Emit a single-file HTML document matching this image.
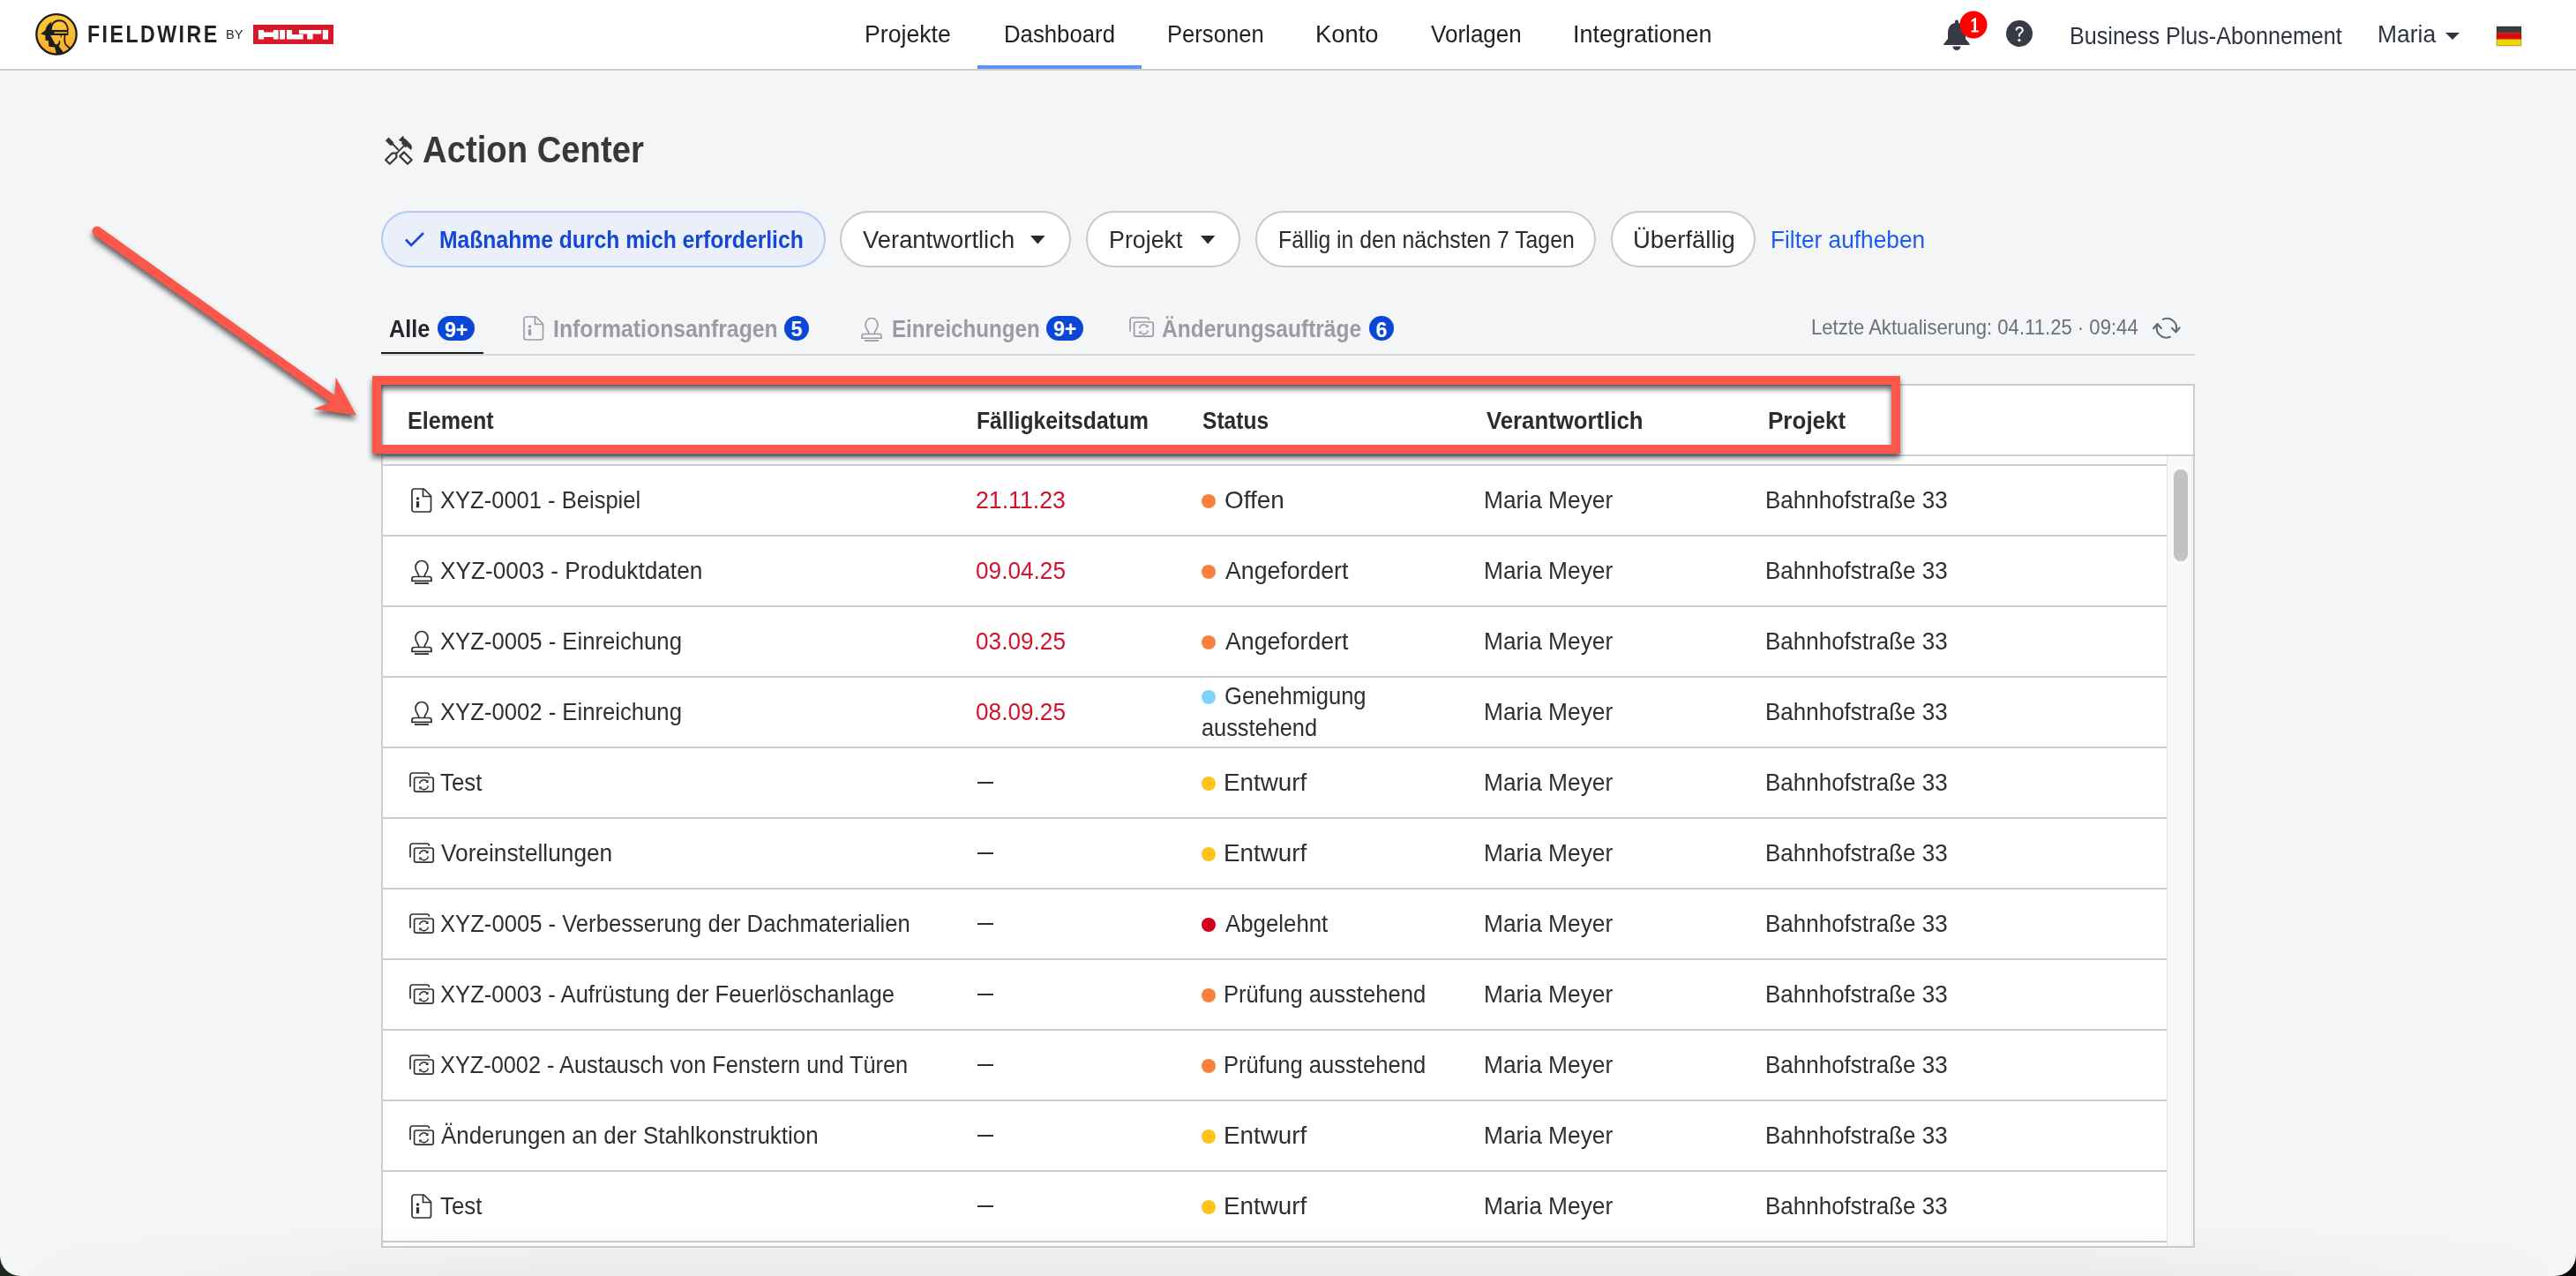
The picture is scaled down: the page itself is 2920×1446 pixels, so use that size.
<!DOCTYPE html><html><head><meta charset='utf-8'><title>Action Center</title><style>
*{margin:0;padding:0;box-sizing:border-box}
html,body{width:2920px;height:1446px;overflow:hidden}
body{position:relative;background:#f4f5f7;font-family:"Liberation Sans",sans-serif}
.t{position:absolute;white-space:nowrap;line-height:1;transform-origin:0 0;font-family:"Liberation Sans",sans-serif}
svg{overflow:visible}
</style></head><body>
<div style="position:absolute;left:0px;top:0px;width:2920px;height:78px;background:#fff"></div>
<div style="position:absolute;left:0px;top:78px;width:2920px;height:2px;background:#cdcdcd"></div>
<svg style="position:absolute;left:38px;top:13px;" width="52" height="52" viewBox="0 0 52 52"><defs><linearGradient id='lg' x1='0' y1='0' x2='0' y2='1'><stop offset='0' stop-color='#fdcb34'/><stop offset='1' stop-color='#f6ad2b'/></linearGradient><clipPath id='lc'><circle cx='26' cy='25.8' r='22.8'/></clipPath></defs><circle cx='26' cy='25.8' r='22.7' fill='url(#lg)' stroke='#1c1d21' stroke-width='2.3'/><g clip-path='url(#lc)' fill='#1c1d21'><path d='M19.8 21 C19.8 14.5 23.5 10.2 29 10.2 C34.8 10.2 38.6 14.5 39 21' fill='none' stroke='#1c1d21' stroke-width='1.9'/><path d='M20.6 11.6 C16.5 13.8 14.2 17.5 13.4 21.2 L8.1 25.5 L13.4 27.1 L13.4 32.6 L17 33.2 L17.3 39.8 L24 40.5 L26.5 50 L36 50 L31.5 43 L28.5 39.2 C30.2 37.6 30.7 35.2 29.9 33 L28.7 33.6 C28.9 36 27 37.6 24.6 37.3 L22.8 33.8 L19.2 27.1 L39.4 27.1 L39.4 21 L19.9 21 C19.9 17 20.1 14 20.6 11.6 Z'/><rect x='23.6' y='23.2' width='14.3' height='1.7' fill='#f0b330'/><rect x='30.6' y='27' width='1.2' height='2.3'/><path d='M35.5 27 C35 31 35 35 36.6 37.6 L42 42.5' fill='none' stroke='#1c1d21' stroke-width='1.7'/></g></svg>
<svg style="position:absolute;left:287px;top:28px;" width="91" height="22" viewBox="0 0 91 22"><rect x='0' y='0' width='91' height='22' fill='#d7182a'/><path d='M5.9 5.9 H12.1 V8.6 H22.8 V5.9 H28.6 V16.6 H22.8 V14.05 H12.1 V16.6 H5.9 Z' fill='#fff'/><rect x='30.1' y='5.9' width='5.9' height='10.7' fill='#fff'/><path d='M37.9 5.9 H44.1 V11.1 H56.7 V16.6 H37.9 Z' fill='#fff'/><path d='M51.9 5.9 H77.3 V10.6 H67.6 V16.6 H61.2 V10.6 H51.9 Z' fill='#fff'/><rect x='78.85' y='5.9' width='6.2' height='10.7' fill='#fff'/></svg>
<div style="position:absolute;left:1108px;top:74px;width:186px;height:4px;background:#5b92f4"></div>
<svg style="position:absolute;left:2202px;top:21px;" width="32" height="36" viewBox="0 0 32 36"><path d='M16 1.5 a2 2 0 0 1 2 2 v1.4 C24 6.2 26 11 26 17 v6 l4.5 5.5 c0.6 0.8 0.2 1.6 -0.8 1.6 H2.3 c-1 0 -1.4 -0.8 -0.8 -1.6 L6 23 v-6 C6 11 8 6.2 14 4.9 V3.5 a2 2 0 0 1 2 -2 z' fill='#353a44'/><path d='M11.5 31.5 h9 a4.5 4.5 0 0 1 -9 0 z' fill='#353a44'/></svg>
<svg style="position:absolute;left:2221px;top:12px;" width="32" height="32" viewBox="0 0 32 32"><circle cx='16' cy='16' r='15.5' fill='#ff0000'/><path d='M13.5 11 L17.5 8.2 H19 V22.5 H21.8 V24.5 H13.6 V22.5 H16.4 V11.6 L13.9 13.1 Z' fill='#fff'/></svg>
<svg style="position:absolute;left:2274px;top:23px;" width="30" height="30" viewBox="0 0 30 30"><circle cx='15' cy='15' r='15' fill='#363b45'/><path d='M10.6 11.5 C10.6 8.6 12.6 7 15.2 7 C17.9 7 19.8 8.7 19.8 11.1 C19.8 13.3 18.4 14.2 17.2 15 C16.3 15.6 15.9 16.1 15.9 17.3 V18.6 H14 V17.1 C14 15.5 14.7 14.6 15.9 13.8 C17 13.1 17.7 12.5 17.7 11.2 C17.7 9.9 16.7 8.9 15.2 8.9 C13.6 8.9 12.6 10 12.6 11.5 Z' fill='#fff'/><circle cx='14.9' cy='22.6' r='1.6' fill='#fff'/></svg>
<svg style="position:absolute;left:2772px;top:37px;" width="16" height="8" viewBox="0 0 16 8"><path d='M0 0 H16 L8 8 Z' fill='#2f3540'/></svg>
<svg style="position:absolute;left:2830px;top:30px;filter:drop-shadow(0 0 1px rgba(0,0,0,0.35))" width="28" height="22" viewBox="0 0 28 22"><rect x='0' y='0' width='28' height='7.4' fill='#3d3d3d'/><rect x='0' y='7.3' width='28' height='7.4' fill='#dd0a0a'/><rect x='0' y='14.6' width='28' height='7.4' fill='#f2d600'/><rect x='0.5' y='0.5' width='27' height='21' fill='none' stroke='rgba(0,0,0,0.18)' stroke-width='1'/></svg>
<svg style="position:absolute;left:432px;top:150px;" width="40" height="40" viewBox="0 0 40 40"><path d='M5.3 9.4 L8.5 6.1 L13.6 11.1 L13.6 13.8 L12.6 14.2 L10.3 14.4 Z' fill='#383838' stroke='#383838' stroke-width='0.8' stroke-linejoin='round'/><path d='M12.8 13 L19.8 20' stroke='#383838' stroke-width='1.9'/><path d='M21.3 27.1 L26 22.4 L34.7 31.2 L30 35.8 Z' fill='none' stroke='#383838' stroke-width='2.2' stroke-linejoin='round'/><path d='M17.4 23.8 L26.3 14.9' stroke='#383838' stroke-width='1.9'/><path d='M5.1 31.3 L12.6 23.6 L17.2 23.6 L17.4 28.2 L9.8 35.7 Z' fill='none' stroke='#383838' stroke-width='2.2' stroke-linejoin='round'/><path d='M20.2 8.8 L25 4.3 L25.8 7.3 L27.3 7.5 L33.2 13.6 C34.8 15.5 35 18 33.8 19.5 L29.5 15.8 L27.6 16.8 L23.2 12.4 L24.4 11 L22.8 9.8 Z' fill='#383838' stroke='#383838' stroke-width='0.8' stroke-linejoin='round'/></svg>
<div style="position:absolute;left:432px;top:239px;width:503.5px;height:63.5px;background:#ebeff9;border:2px solid #b3caf7;border-radius:32px"></div>
<svg style="position:absolute;left:458px;top:262px;" width="24" height="18" viewBox="0 0 24 18"><path d='M2 9.5 L8.2 15.8 L22 2' fill='none' stroke='#1447d6' stroke-width='2.6'/></svg>
<div style="position:absolute;left:952.2px;top:239px;width:262.0px;height:63.5px;background:#fff;border:2px solid #c9cacd;border-radius:32px"></div>
<div style="position:absolute;left:1231px;top:239px;width:175.3px;height:63.5px;background:#fff;border:2px solid #c9cacd;border-radius:32px"></div>
<div style="position:absolute;left:1423.4px;top:239px;width:385.9px;height:63.5px;background:#fff;border:2px solid #c9cacd;border-radius:32px"></div>
<div style="position:absolute;left:1826.2px;top:239px;width:164.0px;height:63.5px;background:#fff;border:2px solid #c9cacd;border-radius:32px"></div>
<svg style="position:absolute;left:1168.4px;top:266.5px;" width="16.6" height="9.5" viewBox="0 0 16.6 9.5"><path d='M0 0 H16.6 L8.3 9.5 Z' fill='#2a2a2a'/></svg>
<svg style="position:absolute;left:1361.3px;top:266.5px;" width="16.3" height="9.5" viewBox="0 0 16.3 9.5"><path d='M0 0 H16.3 L8.15 9.5 Z' fill='#2a2a2a'/></svg>
<div style="position:absolute;left:432px;top:401px;width:2056px;height:2px;background:#d6d8dc"></div>
<div style="position:absolute;left:432px;top:398.7px;width:116px;height:2.8px;background:#1e1e1e"></div>
<div style="position:absolute;left:496px;top:357.8px;width:42px;height:28.19999999999999px;background:#0a47d6;border-radius:14.099999999999994px"></div><span class=t style="left:496px;top:360.0px;width:42px;height:28.19999999999999px;line-height:28.19999999999999px;text-align:center;font-size:23px;font-weight:700;color:#fff">9+</span>
<div style="position:absolute;left:889px;top:358.2px;width:28px;height:27.80000000000001px;background:#0a47d6;border-radius:13.900000000000006px"></div><span class=t style="left:889px;top:360.4px;width:28px;height:27.80000000000001px;line-height:27.80000000000001px;text-align:center;font-size:23px;font-weight:700;color:#fff">5</span>
<div style="position:absolute;left:1186px;top:358.2px;width:42px;height:27.80000000000001px;background:#0a47d6;border-radius:13.900000000000006px"></div><span class=t style="left:1186px;top:360.4px;width:42px;height:27.80000000000001px;line-height:27.80000000000001px;text-align:center;font-size:23px;font-weight:700;color:#fff">9+</span>
<div style="position:absolute;left:1552px;top:357.6px;width:28px;height:28.399999999999977px;background:#0a47d6;border-radius:14.199999999999989px"></div><span class=t style="left:1552px;top:359.8px;width:28px;height:28.399999999999977px;line-height:28.399999999999977px;text-align:center;font-size:23px;font-weight:700;color:#fff">6</span>
<svg style="position:absolute;left:592.5px;top:358px;" width="24" height="28" viewBox="0 0 24 28"><path d='M3 1 H14.5 L22.5 9 V24.5 A2.5 2.5 0 0 1 20 27 H3.5 A2.5 2.5 0 0 1 1 24.5 V3.5 A2.5 2.5 0 0 1 3.5 1 Z' fill='none' stroke='#9a9ca1' stroke-width='1.6' stroke-linejoin='round'/><path d='M13.5 1 V9.5 H22.5' fill='none' stroke='#9a9ca1' stroke-width='1.6'/><circle cx='7.5' cy='12' r='1.7' fill='#9a9ca1'/><rect x='5.9' y='15.2' width='3.2' height='7' fill='#9a9ca1'/></svg>
<svg style="position:absolute;left:975.5px;top:358.5px;" width="24" height="28" viewBox="0 0 24 28"><path d='M9 19.5 C9 16 5 14 5 9 C5 4.8 8 1.5 12 1.5 C16 1.5 19 4.8 19 9 C19 14 15 16 15 19.5' fill='none' stroke='#9a9ca1' stroke-width='1.6'/><path d='M1 24.3 V22 C1 20.5 2 19.5 3.5 19.5 H20.5 C22 19.5 23 20.5 23 22 V24.3 Z' fill='none' stroke='#9a9ca1' stroke-width='1.6'/><rect x='4' y='26.2' width='16' height='1.8' fill='#9a9ca1'/></svg>
<svg style="position:absolute;left:1280px;top:358.5px;" width="28" height="23" viewBox="0 0 28 23"><path d='M1 16 V3.5 A2.5 2.5 0 0 1 3.5 1 H20 A2.5 2.5 0 0 1 22.5 3' fill='none' stroke='#9a9ca1' stroke-width='1.7' stroke-linecap='round'/><rect x='5.6' y='6' width='21.6' height='16.2' rx='2.2' fill='none' stroke='#9a9ca1' stroke-width='1.7'/><path d='M11.5 13 A5 5 0 0 1 20.3 10.6' fill='none' stroke='#9a9ca1' stroke-width='1.4'/><path d='M21.6 8.6 L21.6 12 L18.2 12 Z' fill='#9a9ca1'/><path d='M21.3 15.5 A5 5 0 0 1 12.5 17.8' fill='none' stroke='#9a9ca1' stroke-width='1.4'/><path d='M11.2 19.8 L11.2 16.4 L14.6 16.4 Z' fill='#9a9ca1'/></svg>
<svg style="position:absolute;left:2436px;top:356px;" width="40" height="32" viewBox="0 0 40 32"><g fill='none' stroke='#656b75' stroke-width='2.1' stroke-linecap='round' stroke-linejoin='round'><path d='M15.8 5.9 A10.8 10.8 0 0 1 30.4 19.5'/><path d='M26 15.7 L30.5 20.3 L34.7 15.4'/><path d='M23.8 25.8 A10.8 10.8 0 0 1 9.3 12.5'/><path d='M5 16.3 L9.5 11 L13.9 16'/></g></svg>
<div style="position:absolute;left:432px;top:435px;width:2056px;height:979px;background:#fff;border:2px solid #cacdd4"></div>
<div style="position:absolute;left:434px;top:514.8px;width:2052px;height:1.8px;background:#cacdd4"></div>
<div style="position:absolute;left:2456px;top:516.6px;width:30px;height:895.4px;background:#f9f9f9;border-left:1.5px solid #e6e6e8"></div>
<div style="position:absolute;left:2484px;top:516.6px;width:1px;height:895.4px;background:#ececee"></div>
<div style="position:absolute;left:2464px;top:532px;width:16px;height:104px;background:#c1c1c1;border-radius:8px"></div>
<div style="position:absolute;left:434px;top:526px;width:2022px;height:1.8px;background:#cacdd4"></div>
<div style="position:absolute;left:434px;top:606px;width:2022px;height:1.8px;background:#cacdd4"></div>
<div style="position:absolute;left:434px;top:686px;width:2022px;height:1.8px;background:#cacdd4"></div>
<div style="position:absolute;left:434px;top:766px;width:2022px;height:1.8px;background:#cacdd4"></div>
<div style="position:absolute;left:434px;top:846px;width:2022px;height:1.8px;background:#cacdd4"></div>
<div style="position:absolute;left:434px;top:926px;width:2022px;height:1.8px;background:#cacdd4"></div>
<div style="position:absolute;left:434px;top:1006px;width:2022px;height:1.8px;background:#cacdd4"></div>
<div style="position:absolute;left:434px;top:1086px;width:2022px;height:1.8px;background:#cacdd4"></div>
<div style="position:absolute;left:434px;top:1166px;width:2022px;height:1.8px;background:#cacdd4"></div>
<div style="position:absolute;left:434px;top:1246px;width:2022px;height:1.8px;background:#cacdd4"></div>
<div style="position:absolute;left:434px;top:1326px;width:2022px;height:1.8px;background:#cacdd4"></div>
<div style="position:absolute;left:434px;top:1406px;width:2022px;height:1.8px;background:#cacdd4"></div>
<svg style="position:absolute;left:466px;top:553.0px;" width="24" height="28" viewBox="0 0 24 28"><path d='M3 1 H14.5 L22.5 9 V24.5 A2.5 2.5 0 0 1 20 27 H3.5 A2.5 2.5 0 0 1 1 24.5 V3.5 A2.5 2.5 0 0 1 3.5 1 Z' fill='none' stroke='#2d2f33' stroke-width='1.7' stroke-linejoin='round'/><path d='M13.5 1 V9.5 H22.5' fill='none' stroke='#2d2f33' stroke-width='1.7'/><circle cx='7.5' cy='12' r='1.7' fill='#2d2f33'/><rect x='5.9' y='15.2' width='3.2' height='7' fill='#2d2f33'/></svg>
<div style="position:absolute;left:1362px;top:560.0px;width:16px;height:16px;background:#f5813a;border-radius:50%"></div>
<svg style="position:absolute;left:466px;top:634.3px;" width="24" height="28" viewBox="0 0 24 28"><path d='M9 19.5 C9 16 5 14 5 9 C5 4.8 8 1.5 12 1.5 C16 1.5 19 4.8 19 9 C19 14 15 16 15 19.5' fill='none' stroke='#2d2f33' stroke-width='1.7'/><path d='M1 24.3 V22 C1 20.5 2 19.5 3.5 19.5 H20.5 C22 19.5 23 20.5 23 22 V24.3 Z' fill='none' stroke='#2d2f33' stroke-width='1.7'/><rect x='4' y='26.2' width='16' height='1.8' fill='#2d2f33'/></svg>
<div style="position:absolute;left:1362px;top:640.0px;width:16px;height:16px;background:#f5813a;border-radius:50%"></div>
<svg style="position:absolute;left:466px;top:714.3px;" width="24" height="28" viewBox="0 0 24 28"><path d='M9 19.5 C9 16 5 14 5 9 C5 4.8 8 1.5 12 1.5 C16 1.5 19 4.8 19 9 C19 14 15 16 15 19.5' fill='none' stroke='#2d2f33' stroke-width='1.7'/><path d='M1 24.3 V22 C1 20.5 2 19.5 3.5 19.5 H20.5 C22 19.5 23 20.5 23 22 V24.3 Z' fill='none' stroke='#2d2f33' stroke-width='1.7'/><rect x='4' y='26.2' width='16' height='1.8' fill='#2d2f33'/></svg>
<div style="position:absolute;left:1362px;top:720.0px;width:16px;height:16px;background:#f5813a;border-radius:50%"></div>
<svg style="position:absolute;left:466px;top:794.3px;" width="24" height="28" viewBox="0 0 24 28"><path d='M9 19.5 C9 16 5 14 5 9 C5 4.8 8 1.5 12 1.5 C16 1.5 19 4.8 19 9 C19 14 15 16 15 19.5' fill='none' stroke='#2d2f33' stroke-width='1.7'/><path d='M1 24.3 V22 C1 20.5 2 19.5 3.5 19.5 H20.5 C22 19.5 23 20.5 23 22 V24.3 Z' fill='none' stroke='#2d2f33' stroke-width='1.7'/><rect x='4' y='26.2' width='16' height='1.8' fill='#2d2f33'/></svg>
<div style="position:absolute;left:1362px;top:782.2px;width:16px;height:16px;background:#7dd3fc;border-radius:50%"></div>
<svg style="position:absolute;left:464px;top:875.0px;" width="28" height="23" viewBox="0 0 28 23"><path d='M1 16 V3.5 A2.5 2.5 0 0 1 3.5 1 H20 A2.5 2.5 0 0 1 22.5 3' fill='none' stroke='#2d2f33' stroke-width='1.7' stroke-linecap='round'/><rect x='5.6' y='6' width='21.6' height='16.2' rx='2.2' fill='none' stroke='#2d2f33' stroke-width='1.7'/><path d='M11.5 13 A5 5 0 0 1 20.3 10.6' fill='none' stroke='#2d2f33' stroke-width='1.4'/><path d='M21.6 8.6 L21.6 12 L18.2 12 Z' fill='#2d2f33'/><path d='M21.3 15.5 A5 5 0 0 1 12.5 17.8' fill='none' stroke='#2d2f33' stroke-width='1.4'/><path d='M11.2 19.8 L11.2 16.4 L14.6 16.4 Z' fill='#2d2f33'/></svg>
<div style="position:absolute;left:1362px;top:880.0px;width:16px;height:16px;background:#fcc419;border-radius:50%"></div>
<div style="position:absolute;left:1108px;top:886.3px;width:17.6px;height:2px;background:#2d2f33"></div>
<svg style="position:absolute;left:464px;top:955.0px;" width="28" height="23" viewBox="0 0 28 23"><path d='M1 16 V3.5 A2.5 2.5 0 0 1 3.5 1 H20 A2.5 2.5 0 0 1 22.5 3' fill='none' stroke='#2d2f33' stroke-width='1.7' stroke-linecap='round'/><rect x='5.6' y='6' width='21.6' height='16.2' rx='2.2' fill='none' stroke='#2d2f33' stroke-width='1.7'/><path d='M11.5 13 A5 5 0 0 1 20.3 10.6' fill='none' stroke='#2d2f33' stroke-width='1.4'/><path d='M21.6 8.6 L21.6 12 L18.2 12 Z' fill='#2d2f33'/><path d='M21.3 15.5 A5 5 0 0 1 12.5 17.8' fill='none' stroke='#2d2f33' stroke-width='1.4'/><path d='M11.2 19.8 L11.2 16.4 L14.6 16.4 Z' fill='#2d2f33'/></svg>
<div style="position:absolute;left:1362px;top:960.0px;width:16px;height:16px;background:#fcc419;border-radius:50%"></div>
<div style="position:absolute;left:1108px;top:966.3px;width:17.6px;height:2px;background:#2d2f33"></div>
<svg style="position:absolute;left:464px;top:1035.0px;" width="28" height="23" viewBox="0 0 28 23"><path d='M1 16 V3.5 A2.5 2.5 0 0 1 3.5 1 H20 A2.5 2.5 0 0 1 22.5 3' fill='none' stroke='#2d2f33' stroke-width='1.7' stroke-linecap='round'/><rect x='5.6' y='6' width='21.6' height='16.2' rx='2.2' fill='none' stroke='#2d2f33' stroke-width='1.7'/><path d='M11.5 13 A5 5 0 0 1 20.3 10.6' fill='none' stroke='#2d2f33' stroke-width='1.4'/><path d='M21.6 8.6 L21.6 12 L18.2 12 Z' fill='#2d2f33'/><path d='M21.3 15.5 A5 5 0 0 1 12.5 17.8' fill='none' stroke='#2d2f33' stroke-width='1.4'/><path d='M11.2 19.8 L11.2 16.4 L14.6 16.4 Z' fill='#2d2f33'/></svg>
<div style="position:absolute;left:1362px;top:1040.0px;width:16px;height:16px;background:#d0021b;border-radius:50%"></div>
<div style="position:absolute;left:1108px;top:1046.3px;width:17.6px;height:2px;background:#2d2f33"></div>
<svg style="position:absolute;left:464px;top:1115.0px;" width="28" height="23" viewBox="0 0 28 23"><path d='M1 16 V3.5 A2.5 2.5 0 0 1 3.5 1 H20 A2.5 2.5 0 0 1 22.5 3' fill='none' stroke='#2d2f33' stroke-width='1.7' stroke-linecap='round'/><rect x='5.6' y='6' width='21.6' height='16.2' rx='2.2' fill='none' stroke='#2d2f33' stroke-width='1.7'/><path d='M11.5 13 A5 5 0 0 1 20.3 10.6' fill='none' stroke='#2d2f33' stroke-width='1.4'/><path d='M21.6 8.6 L21.6 12 L18.2 12 Z' fill='#2d2f33'/><path d='M21.3 15.5 A5 5 0 0 1 12.5 17.8' fill='none' stroke='#2d2f33' stroke-width='1.4'/><path d='M11.2 19.8 L11.2 16.4 L14.6 16.4 Z' fill='#2d2f33'/></svg>
<div style="position:absolute;left:1362px;top:1120.0px;width:16px;height:16px;background:#f5813a;border-radius:50%"></div>
<div style="position:absolute;left:1108px;top:1126.3px;width:17.6px;height:2px;background:#2d2f33"></div>
<svg style="position:absolute;left:464px;top:1195.0px;" width="28" height="23" viewBox="0 0 28 23"><path d='M1 16 V3.5 A2.5 2.5 0 0 1 3.5 1 H20 A2.5 2.5 0 0 1 22.5 3' fill='none' stroke='#2d2f33' stroke-width='1.7' stroke-linecap='round'/><rect x='5.6' y='6' width='21.6' height='16.2' rx='2.2' fill='none' stroke='#2d2f33' stroke-width='1.7'/><path d='M11.5 13 A5 5 0 0 1 20.3 10.6' fill='none' stroke='#2d2f33' stroke-width='1.4'/><path d='M21.6 8.6 L21.6 12 L18.2 12 Z' fill='#2d2f33'/><path d='M21.3 15.5 A5 5 0 0 1 12.5 17.8' fill='none' stroke='#2d2f33' stroke-width='1.4'/><path d='M11.2 19.8 L11.2 16.4 L14.6 16.4 Z' fill='#2d2f33'/></svg>
<div style="position:absolute;left:1362px;top:1200.0px;width:16px;height:16px;background:#f5813a;border-radius:50%"></div>
<div style="position:absolute;left:1108px;top:1206.3px;width:17.6px;height:2px;background:#2d2f33"></div>
<svg style="position:absolute;left:464px;top:1275.0px;" width="28" height="23" viewBox="0 0 28 23"><path d='M1 16 V3.5 A2.5 2.5 0 0 1 3.5 1 H20 A2.5 2.5 0 0 1 22.5 3' fill='none' stroke='#2d2f33' stroke-width='1.7' stroke-linecap='round'/><rect x='5.6' y='6' width='21.6' height='16.2' rx='2.2' fill='none' stroke='#2d2f33' stroke-width='1.7'/><path d='M11.5 13 A5 5 0 0 1 20.3 10.6' fill='none' stroke='#2d2f33' stroke-width='1.4'/><path d='M21.6 8.6 L21.6 12 L18.2 12 Z' fill='#2d2f33'/><path d='M21.3 15.5 A5 5 0 0 1 12.5 17.8' fill='none' stroke='#2d2f33' stroke-width='1.4'/><path d='M11.2 19.8 L11.2 16.4 L14.6 16.4 Z' fill='#2d2f33'/></svg>
<div style="position:absolute;left:1362px;top:1280.0px;width:16px;height:16px;background:#fcc419;border-radius:50%"></div>
<div style="position:absolute;left:1108px;top:1286.3px;width:17.6px;height:2px;background:#2d2f33"></div>
<svg style="position:absolute;left:466px;top:1353.0px;" width="24" height="28" viewBox="0 0 24 28"><path d='M3 1 H14.5 L22.5 9 V24.5 A2.5 2.5 0 0 1 20 27 H3.5 A2.5 2.5 0 0 1 1 24.5 V3.5 A2.5 2.5 0 0 1 3.5 1 Z' fill='none' stroke='#2d2f33' stroke-width='1.7' stroke-linejoin='round'/><path d='M13.5 1 V9.5 H22.5' fill='none' stroke='#2d2f33' stroke-width='1.7'/><circle cx='7.5' cy='12' r='1.7' fill='#2d2f33'/><rect x='5.9' y='15.2' width='3.2' height='7' fill='#2d2f33'/></svg>
<div style="position:absolute;left:1362px;top:1360.0px;width:16px;height:16px;background:#fcc419;border-radius:50%"></div>
<div style="position:absolute;left:1108px;top:1366.3px;width:17.6px;height:2px;background:#2d2f33"></div>
<span class=t style="left:979.90px;top:24.50px;font-size:28px;font-weight:400;color:#1f2023;transform:scaleX(0.9520);">Projekte</span>
<span class=t style="left:1137.76px;top:24.50px;font-size:28px;font-weight:400;color:#1f2023;transform:scaleX(0.9195);">Dashboard</span>
<span class=t style="left:1323.07px;top:24.50px;font-size:28px;font-weight:400;color:#1f2023;transform:scaleX(0.9147);">Personen</span>
<span class=t style="left:1491.05px;top:24.50px;font-size:28px;font-weight:400;color:#1f2023;transform:scaleX(0.9771);">Konto</span>
<span class=t style="left:1622.30px;top:24.50px;font-size:28px;font-weight:400;color:#1f2023;transform:scaleX(0.9303);">Vorlagen</span>
<span class=t style="left:1782.91px;top:24.50px;font-size:28px;font-weight:400;color:#1f2023;transform:scaleX(0.9635);">Integrationen</span>
<span class=t style="left:2345.67px;top:26.62px;font-size:27.5px;font-weight:400;color:#2e3440;transform:scaleX(0.9140);">Business Plus-Abonnement</span>
<span class=t style="left:2695.48px;top:24.73px;font-size:27.5px;font-weight:400;color:#2e3440;transform:scaleX(0.9612);">Maria</span>
<span class=t style="left:479.38px;top:149.25px;font-size:41.7px;font-weight:700;color:#383838;transform:scaleX(0.9180);">Action Center</span>
<span class=t style="left:497.51px;top:257.62px;font-size:27.5px;font-weight:700;color:#1447d6;transform:scaleX(0.8974);">Maßnahme durch mich erforderlich</span>
<span class=t style="left:977.80px;top:258.02px;font-size:27.5px;font-weight:400;color:#2a2b2e;transform:scaleX(0.9965);">Verantwortlich</span>
<span class=t style="left:1256.85px;top:258.02px;font-size:27.5px;font-weight:400;color:#2a2b2e;transform:scaleX(0.9750);">Projekt</span>
<span class=t style="left:1449.20px;top:258.02px;font-size:27.5px;font-weight:400;color:#2a2b2e;transform:scaleX(0.9011);">Fällig in den nächsten 7 Tagen</span>
<span class=t style="left:1851.31px;top:258.02px;font-size:27.5px;font-weight:400;color:#2a2b2e;transform:scaleX(0.9973);">Überfällig</span>
<span class=t style="left:2006.69px;top:258.02px;font-size:27.5px;font-weight:400;color:#1a5cf5;transform:scaleX(0.9544);">Filter aufheben</span>
<span class=t style="left:441.48px;top:358.62px;font-size:27.5px;font-weight:700;color:#252629;transform:scaleX(0.9184);">Alle</span>
<span class=t style="left:626.70px;top:358.93px;font-size:27.5px;font-weight:700;color:#9a9ca1;transform:scaleX(0.9011);">Informationsanfragen</span>
<span class=t style="left:1010.84px;top:358.93px;font-size:27.5px;font-weight:700;color:#9a9ca1;transform:scaleX(0.8781);">Einreichungen</span>
<span class=t style="left:1317.11px;top:358.93px;font-size:27.5px;font-weight:700;color:#9a9ca1;transform:scaleX(0.8913);">Änderungsaufträge</span>
<span class=t style="left:2052.61px;top:360.21px;font-size:23.4px;font-weight:400;color:#6b7079;transform:scaleX(0.9449);">Letzte Aktualiserung: 04.11.25 · 09:44</span>
<span class=t style="left:462.22px;top:463.12px;font-size:27.5px;font-weight:700;color:#2a2c30;transform:scaleX(0.9129);">Element</span>
<span class=t style="left:1106.80px;top:462.93px;font-size:27.5px;font-weight:700;color:#2a2c30;transform:scaleX(0.8986);">Fälligkeitsdatum</span>
<span class=t style="left:1363.11px;top:462.93px;font-size:27.5px;font-weight:700;color:#2a2c30;transform:scaleX(0.8939);">Status</span>
<span class=t style="left:1684.60px;top:463.12px;font-size:27.5px;font-weight:700;color:#2a2c30;transform:scaleX(0.9367);">Verantwortlich</span>
<span class=t style="left:2003.81px;top:463.12px;font-size:27.5px;font-weight:700;color:#2a2c30;transform:scaleX(0.9462);">Projekt</span>
<span class=t style="left:499.47px;top:552.73px;font-size:27.5px;font-weight:400;color:#2d2f33;transform:scaleX(0.9289);">XYZ-0001 - Beispiel</span>
<span class=t style="left:1105.53px;top:552.73px;font-size:27.5px;font-weight:400;color:#d0142c;transform:scaleX(0.9709);">21.11.23</span>
<span class=t style="left:1387.78px;top:552.73px;font-size:27.5px;font-weight:400;color:#2d2f33;transform:scaleX(1.0156);">Offen</span>
<span class=t style="left:1681.59px;top:552.73px;font-size:27.5px;font-weight:400;color:#2d2f33;transform:scaleX(0.9570);">Maria Meyer</span>
<span class=t style="left:2001.41px;top:552.73px;font-size:27.5px;font-weight:400;color:#2d2f33;transform:scaleX(0.9451);">Bahnhofstraße 33</span>
<span class=t style="left:499.45px;top:632.73px;font-size:27.5px;font-weight:400;color:#2d2f33;transform:scaleX(0.9534);">XYZ-0003 - Produktdaten</span>
<span class=t style="left:1105.55px;top:632.73px;font-size:27.5px;font-weight:400;color:#d0142c;transform:scaleX(0.9524);">09.04.25</span>
<span class=t style="left:1388.80px;top:632.73px;font-size:27.5px;font-weight:400;color:#2d2f33;transform:scaleX(0.9701);">Angefordert</span>
<span class=t style="left:1681.59px;top:632.73px;font-size:27.5px;font-weight:400;color:#2d2f33;transform:scaleX(0.9570);">Maria Meyer</span>
<span class=t style="left:2001.41px;top:632.73px;font-size:27.5px;font-weight:400;color:#2d2f33;transform:scaleX(0.9451);">Bahnhofstraße 33</span>
<span class=t style="left:499.47px;top:712.73px;font-size:27.5px;font-weight:400;color:#2d2f33;transform:scaleX(0.9333);">XYZ-0005 - Einreichung</span>
<span class=t style="left:1105.55px;top:712.73px;font-size:27.5px;font-weight:400;color:#d0142c;transform:scaleX(0.9524);">03.09.25</span>
<span class=t style="left:1388.80px;top:712.73px;font-size:27.5px;font-weight:400;color:#2d2f33;transform:scaleX(0.9701);">Angefordert</span>
<span class=t style="left:1681.59px;top:712.73px;font-size:27.5px;font-weight:400;color:#2d2f33;transform:scaleX(0.9570);">Maria Meyer</span>
<span class=t style="left:2001.41px;top:712.73px;font-size:27.5px;font-weight:400;color:#2d2f33;transform:scaleX(0.9451);">Bahnhofstraße 33</span>
<span class=t style="left:499.47px;top:792.73px;font-size:27.5px;font-weight:400;color:#2d2f33;transform:scaleX(0.9333);">XYZ-0002 - Einreichung</span>
<span class=t style="left:1105.55px;top:792.73px;font-size:27.5px;font-weight:400;color:#d0142c;transform:scaleX(0.9524);">08.09.25</span>
<span class=t style="left:1387.67px;top:775.02px;font-size:27.5px;font-weight:400;color:#2d2f33;transform:scaleX(0.9294);">Genehmigung</span>
<span class=t style="left:1361.68px;top:811.12px;font-size:27.5px;font-weight:400;color:#2d2f33;transform:scaleX(0.9214);">ausstehend</span>
<span class=t style="left:1681.59px;top:792.73px;font-size:27.5px;font-weight:400;color:#2d2f33;transform:scaleX(0.9570);">Maria Meyer</span>
<span class=t style="left:2001.41px;top:792.73px;font-size:27.5px;font-weight:400;color:#2d2f33;transform:scaleX(0.9451);">Bahnhofstraße 33</span>
<span class=t style="left:499.46px;top:872.73px;font-size:27.5px;font-weight:400;color:#2d2f33;transform:scaleX(0.9408);">Test</span>
<span class=t style="left:1386.78px;top:872.73px;font-size:27.5px;font-weight:400;color:#2d2f33;transform:scaleX(1.0110);">Entwurf</span>
<span class=t style="left:1681.59px;top:872.73px;font-size:27.5px;font-weight:400;color:#2d2f33;transform:scaleX(0.9570);">Maria Meyer</span>
<span class=t style="left:2001.41px;top:872.73px;font-size:27.5px;font-weight:400;color:#2d2f33;transform:scaleX(0.9451);">Bahnhofstraße 33</span>
<span class=t style="left:500.40px;top:952.73px;font-size:27.5px;font-weight:400;color:#2d2f33;transform:scaleX(0.9550);">Voreinstellungen</span>
<span class=t style="left:1386.78px;top:952.73px;font-size:27.5px;font-weight:400;color:#2d2f33;transform:scaleX(1.0110);">Entwurf</span>
<span class=t style="left:1681.59px;top:952.73px;font-size:27.5px;font-weight:400;color:#2d2f33;transform:scaleX(0.9570);">Maria Meyer</span>
<span class=t style="left:2001.41px;top:952.73px;font-size:27.5px;font-weight:400;color:#2d2f33;transform:scaleX(0.9451);">Bahnhofstraße 33</span>
<span class=t style="left:499.47px;top:1032.72px;font-size:27.5px;font-weight:400;color:#2d2f33;transform:scaleX(0.9320);">XYZ-0005 - Verbesserung der Dachmaterialien</span>
<span class=t style="left:1388.80px;top:1032.72px;font-size:27.5px;font-weight:400;color:#2d2f33;transform:scaleX(0.9387);">Abgelehnt</span>
<span class=t style="left:1681.59px;top:1032.72px;font-size:27.5px;font-weight:400;color:#2d2f33;transform:scaleX(0.9570);">Maria Meyer</span>
<span class=t style="left:2001.41px;top:1032.72px;font-size:27.5px;font-weight:400;color:#2d2f33;transform:scaleX(0.9451);">Bahnhofstraße 33</span>
<span class=t style="left:499.47px;top:1112.72px;font-size:27.5px;font-weight:400;color:#2d2f33;transform:scaleX(0.9307);">XYZ-0003 - Aufrüstung der Feuerlöschanlage</span>
<span class=t style="left:1386.94px;top:1112.72px;font-size:27.5px;font-weight:400;color:#2d2f33;transform:scaleX(0.9310);">Prüfung ausstehend</span>
<span class=t style="left:1681.59px;top:1112.72px;font-size:27.5px;font-weight:400;color:#2d2f33;transform:scaleX(0.9570);">Maria Meyer</span>
<span class=t style="left:2001.41px;top:1112.72px;font-size:27.5px;font-weight:400;color:#2d2f33;transform:scaleX(0.9451);">Bahnhofstraße 33</span>
<span class=t style="left:499.48px;top:1192.72px;font-size:27.5px;font-weight:400;color:#2d2f33;transform:scaleX(0.9208);">XYZ-0002 - Austausch von Fenstern und Türen</span>
<span class=t style="left:1386.94px;top:1192.72px;font-size:27.5px;font-weight:400;color:#2d2f33;transform:scaleX(0.9310);">Prüfung ausstehend</span>
<span class=t style="left:1681.59px;top:1192.72px;font-size:27.5px;font-weight:400;color:#2d2f33;transform:scaleX(0.9570);">Maria Meyer</span>
<span class=t style="left:2001.41px;top:1192.72px;font-size:27.5px;font-weight:400;color:#2d2f33;transform:scaleX(0.9451);">Bahnhofstraße 33</span>
<span class=t style="left:500.40px;top:1272.72px;font-size:27.5px;font-weight:400;color:#2d2f33;transform:scaleX(0.9416);">Änderungen an der Stahlkonstruktion</span>
<span class=t style="left:1386.78px;top:1272.72px;font-size:27.5px;font-weight:400;color:#2d2f33;transform:scaleX(1.0110);">Entwurf</span>
<span class=t style="left:1681.59px;top:1272.72px;font-size:27.5px;font-weight:400;color:#2d2f33;transform:scaleX(0.9570);">Maria Meyer</span>
<span class=t style="left:2001.41px;top:1272.72px;font-size:27.5px;font-weight:400;color:#2d2f33;transform:scaleX(0.9451);">Bahnhofstraße 33</span>
<span class=t style="left:499.46px;top:1352.72px;font-size:27.5px;font-weight:400;color:#2d2f33;transform:scaleX(0.9408);">Test</span>
<span class=t style="left:1386.78px;top:1352.72px;font-size:27.5px;font-weight:400;color:#2d2f33;transform:scaleX(1.0110);">Entwurf</span>
<span class=t style="left:1681.59px;top:1352.72px;font-size:27.5px;font-weight:400;color:#2d2f33;transform:scaleX(0.9570);">Maria Meyer</span>
<span class=t style="left:2001.41px;top:1352.72px;font-size:27.5px;font-weight:400;color:#2d2f33;transform:scaleX(0.9451);">Bahnhofstraße 33</span>
<span class=t style="left:98.75px;top:25.00px;font-size:28px;font-weight:700;color:#1f2125;transform:scaleX(0.8263);letter-spacing:3px;">FIELDWIRE</span>
<span class=t style="left:255.67px;top:32.13px;font-size:14.2px;font-weight:400;color:#2a2c30;transform:scaleX(1.0294);">BY</span>
<div style="position:absolute;left:422px;top:426px;width:1732px;height:88px;border:10.5px solid #fc574b;filter:drop-shadow(0px 5px 3px rgba(0,0,0,0.62))"></div>
<svg style="position:absolute;left:90px;top:245px;filter:drop-shadow(0px 5px 3px rgba(0,0,0,0.62))" width="330" height="240" viewBox="0 0 330 240"><path d='M23.2 12.5 L289.6 203 L290.6 182.5 L313.9 225.5 L265.3 218.5 L284.3 210.7 L16.8 21.5 A5.5 5.5 0 0 1 23.2 12.5 Z' fill='#fc574b'/></svg>
<div style="position:absolute;left:0px;top:1390px;width:2920px;height:56px;background:linear-gradient(to bottom,rgba(0,0,0,0),rgba(0,0,0,0.045));-webkit-mask-image:linear-gradient(to right,transparent 0,#000 22%,#000 80%,transparent 100%);mask-image:linear-gradient(to right,transparent 0,#000 22%,#000 80%,transparent 100%)"></div>
<svg style="position:absolute;left:0px;top:1423px;" width="23" height="23" viewBox="0 0 23 23"><path d='M0 0 V23 H23 A23 23 0 0 1 0 0 Z' fill='#1b2a1d'/></svg>
<svg style="position:absolute;left:2896px;top:1422px;" width="24" height="24" viewBox="0 0 24 24"><path d='M24 0 V24 H0 A24 24 0 0 0 24 0 Z' fill='#0a0a0a'/></svg>
</body></html>
